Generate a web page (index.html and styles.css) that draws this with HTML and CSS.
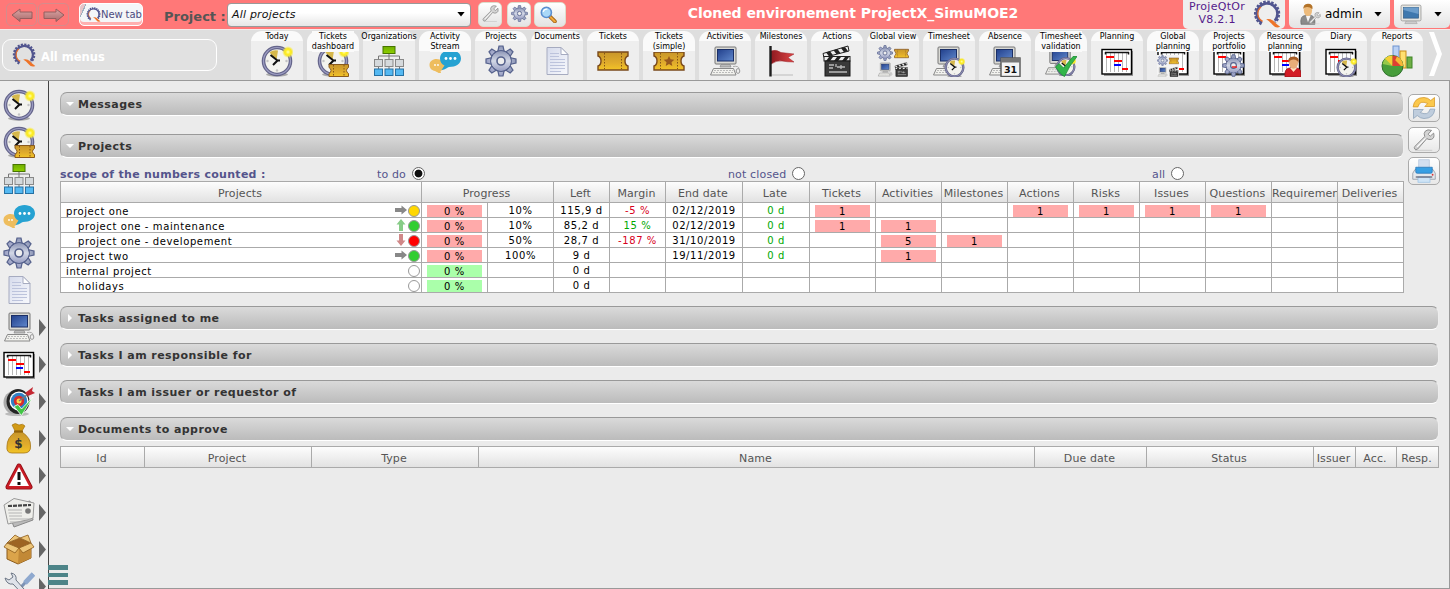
FILE: index.html
```html
<!DOCTYPE html>
<html lang="en">
<head>
<meta charset="utf-8">
<title>ProjeQtOr - Today</title>
<link rel="stylesheet" href="styles.css">
</head>
<body>
<svg class="defs" width="0" height="0" aria-hidden="true">
  <defs>
    <linearGradient id="steel" x1="0" y1="0" x2="0" y2="1"><stop offset="0" stop-color="#8f98b8"/><stop offset=".5" stop-color="#d3d8e6"/><stop offset="1" stop-color="#9aa0c4"/></linearGradient>
    <linearGradient id="screen" x1="0" y1="0" x2="1" y2="1"><stop offset="0" stop-color="#22408c"/><stop offset="1" stop-color="#6088cc"/></linearGradient>
    <linearGradient id="gold" x1="0" y1="0" x2="0" y2="1"><stop offset="0" stop-color="#c8962a"/><stop offset=".6" stop-color="#e0ac2c"/><stop offset="1" stop-color="#f2c426"/></linearGradient>
    <linearGradient id="page" x1="0" y1="0" x2="1" y2="1"><stop offset="0" stop-color="#d6dbec"/><stop offset="1" stop-color="#f8f9fd"/></linearGradient>
    <linearGradient id="red" x1="0" y1="0" x2="1" y2="0"><stop offset="0" stop-color="#8e1a20"/><stop offset="1" stop-color="#df4545"/></linearGradient>
    <linearGradient id="lime" x1="0" y1="0" x2="0" y2="1"><stop offset="0" stop-color="#6fae00"/><stop offset="1" stop-color="#8fd000"/></linearGradient>
    <linearGradient id="arrowfill" x1="0" y1="0" x2="0" y2="1"><stop offset="0" stop-color="#dba5a5"/><stop offset="1" stop-color="#a86a6a"/></linearGradient>
    <radialGradient id="glow"><stop offset="0" stop-color="#ffffb0"/><stop offset=".4" stop-color="#ffee20"/><stop offset=".6" stop-color="#f5e632"/><stop offset="1" stop-color="#fff040" stop-opacity="0"/></radialGradient>
  </defs>

  <symbol id="i-clock" viewBox="0 0 32 32">
    <ellipse cx="16" cy="29.500" rx="11" ry="2.200" fill="#aaa"/>
    <circle cx="16" cy="16" r="13.500" fill="#f3f3ee" stroke="#64648a" stroke-width="3.600"/>
    <circle cx="16" cy="16" r="13.500" fill="none" stroke="#9c9dc2" stroke-width="1.200"/>
    <path d="M15.500 15 8.500 7.500Q12 4.500 17 5.500Z" fill="#d6b84b"/>
    <path d="M9.500 10 16.500 15.500 12 20M16 15.500h3" fill="none" stroke="#111" stroke-width="2"/>
    <g fill="#c4c4c4"><circle cx="16" cy="25.500" r="1.200"/><circle cx="6.500" cy="16" r="1.200"/><circle cx="25.500" cy="16" r="1.200"/></g>
    <circle cx="27" cy="7" r="6" fill="url(#glow)"/>
  </symbol>
  <symbol id="i-ticket" viewBox="0 0 32 32">
    <path d="M1 7H31V11Q28 12 28 16T31 21V25H1V21Q4 20 4 16T1 11Z" fill="url(#gold)" stroke="#7a4a1c" stroke-width="1.400"/>
    <path d="M7.500 8V24M24.500 8V24" stroke="#855618" stroke-width="1" stroke-dasharray="1.500 1.500"/>
  </symbol>
  <symbol id="i-ticketstar" viewBox="0 0 32 32">
    <use href="#i-ticket"/>
    <path d="M16 11l1.600 3.300 3.700.4-2.800 2.500.8 3.700L16 19l-3.300 1.900.8-3.700-2.800-2.500 3.700-.4Z" fill="#98591e"/>
  </symbol>
  <symbol id="i-ticketdash" viewBox="0 0 32 32">
    <use href="#i-clock"/>
    <path d="M12 19.500H31.500V22.500Q29.500 23.500 29.500 25.500T31.500 28.500V31.500H12V28.500Q14 27.500 14 25.500T12 22.500Z" fill="url(#gold)" stroke="#8a5a1c"/>
    <path d="M16.500 20V31M27 20V31" stroke="#855618" stroke-dasharray="1.500 1.500"/>
  </symbol>
  <symbol id="i-org" viewBox="0 0 32 32">
    <path d="M16 9V14M5.500 14V11H26.500V14M5.500 20V24M16 20V24M26.500 20V24" fill="none" stroke="#777"/>
    <rect x="10" y="1.500" width="12" height="7" fill="url(#lime)" stroke="#477400"/>
    <g fill="#d5d9dc" stroke="#888"><rect x="1.500" y="14.500" width="8" height="7"/><rect x="12" y="14.500" width="8" height="7"/><rect x="22.500" y="14.500" width="8" height="7"/></g>
    <g fill="#55b9f2" stroke="#2671a3"><rect x="1.500" y="24" width="8" height="6.500"/><rect x="12" y="24" width="8" height="6.500"/><rect x="22.500" y="24" width="8" height="6.500"/></g>
  </symbol>
  <symbol id="i-chat" viewBox="0 0 32 32">
    <path d="M7.500 14C3.500 14 .5 16.500.5 20S3 25.500 6 26C8 27 9.500 28.500 12 28L11.500 26C14.500 25 16 23 16 20S12 14 7.500 14Z" fill="#eebd5e"/>
    <path d="M21.500 5C15.500 5 11 8.500 11 13.500 11 17 13 19.500 15.500 20.500L12.500 25C16.500 24.500 18.500 22.500 20 22 27 22 32 18.500 32 13.500S27.500 5 21.500 5Z" fill="#26a2d2"/>
    <g fill="#fff"><circle cx="17" cy="13.500" r="1.400"/><circle cx="21.500" cy="13.500" r="1.400"/><circle cx="26" cy="13.500" r="1.400"/><circle cx="6" cy="20" r=".9"/><circle cx="9" cy="20" r=".9"/></g>
  </symbol>
  <symbol id="i-gear" viewBox="0 0 32 32">
    <g fill="url(#steel)" stroke="#55618c" stroke-width="1.200">
      <path d="M14 1H18L19.500 8H12.500ZM12.500 24H19.500L18 31H14Z"/>
      <path d="M14 1H18L19.500 8H12.500ZM12.500 24H19.500L18 31H14Z" transform="rotate(45 16 16)"/>
      <path d="M14 1H18L19.500 8H12.500ZM12.500 24H19.500L18 31H14Z" transform="rotate(90 16 16)"/>
      <path d="M14 1H18L19.500 8H12.500ZM12.500 24H19.500L18 31H14Z" transform="rotate(135 16 16)"/>
      <circle cx="16" cy="16" r="10.300"/>
    </g>
    <circle cx="16" cy="16" r="9.700" fill="url(#steel)"/>
    <circle cx="16" cy="16" r="4" fill="#eee" stroke="#55618c" stroke-width="1.600"/>
  </symbol>
  <symbol id="i-doc" viewBox="0 0 32 32">
    <path d="M6 2.500H20L27 9.500V29.500H6Z" fill="url(#page)" stroke="#a6abc0"/>
    <path d="M20 2.500V9.500H27Z" fill="#fff" stroke="#a6abc0"/>
    <path d="M9 8.500H18M9 11.500H18M9 14.500H24M9 17.500H24M9 20.500H24M9 23.500H24M9 26.500H20" stroke="#bcc3dc"/>
  </symbol>
  <symbol id="i-computer" viewBox="0 0 32 32">
    <rect x="6" y="2" width="21" height="17" rx="1" fill="#d9d9d4" stroke="#777"/>
    <rect x="8.500" y="4.500" width="16" height="11.500" fill="url(#screen)" stroke="#1b2f66"/>
    <path d="M12 19.500H21L22 22H11Z" fill="#bbb" stroke="#888" stroke-width=".7"/>
    <path d="M4.500 23.500H24.500L27 30H1.500Z" fill="#f2f2ee" stroke="#888"/>
    <path d="M5 25.500H24M4 27.500H25" stroke="#bbb" stroke-dasharray="2 1"/>
    <path d="M24 21.500Q30 20.500 30 24" fill="none" stroke="#aaa"/>
    <ellipse cx="29" cy="26" rx="1.800" ry="2.400" fill="#eee" stroke="#999"/>
  </symbol>
  <symbol id="i-flag" viewBox="0 0 32 32">
    <path d="M7 30H28" stroke="#ccc" stroke-width="1.500"/>
    <path d="M6 6Q11 4 16 7.500L29 9 23 12.500 29 17Q22 17 17 16T6 19Z" fill="url(#red)" stroke="#9a2228" stroke-width=".5"/>
    <path d="M5.500 1V31.500" stroke="#1e1e1e" stroke-width="2.400"/>
  </symbol>
  <symbol id="i-clap" viewBox="0 0 32 32">
    <path d="M2 8.500 27 1 28 6 3 12.500Z" fill="#eee" stroke="#222"/>
    <path d="M5 7.500 8 11.300 12 10.200 9 6.300ZM12.500 5.300 15.500 9.200 19.500 8.200 16.500 4.100ZM20 3 23 7.200 27 6.200 24 1.900Z" fill="#222"/>
    <rect x="3" y="11.500" width="26" height="4.500" fill="#eee" stroke="#222"/>
    <path d="M5 16 8 12H12L9 16ZM13 16 16 12H20L17 16ZM21 16 24 12H28L25 16Z" fill="#222"/>
    <rect x="4" y="16" width="25" height="15" fill="#3a3a3a" stroke="#181818"/>
    <path d="M8 20H13M15 19V22M8 23H12M16 22H24M20 20V24M8 27H26" stroke="#bbb" stroke-width="1.300"/>
  </symbol>
  <symbol id="i-global" viewBox="0 0 32 32">
    <use href="#i-gear" x="0" y="0" width="16" height="16"/>
    <use href="#i-ticket" x="17" y="1" width="15" height="15"/>
    <use href="#i-computer" x="0" y="17" width="16" height="15"/>
    <use href="#i-clap" x="17" y="17" width="15" height="15"/>
  </symbol>
  <symbol id="i-timesheet" viewBox="0 0 32 32">
    <use href="#i-computer" x="-1"/>
    <use href="#i-clock" x="11" y="12" width="21" height="21"/>
  </symbol>
  <symbol id="i-absence" viewBox="0 0 32 32">
    <use href="#i-computer" x="-1"/>
    <rect x="12" y="13" width="19" height="18.500" fill="#f4f4f4" stroke="#555" stroke-width="1.400"/>
    <path d="M12 13H31V17.500H12Z" fill="#777"/>
  </symbol>
  <symbol id="i-validation" viewBox="0 0 32 32">
    <use href="#i-timesheet" width="31" height="31"/>
    <path d="M10.500 22 14 18.500 18.500 23 28 11.500H32Q24 21 19.500 31.500Q16 30 10.500 22Z" fill="#32b54a" stroke="#198b31" stroke-width=".8"/>
  </symbol>
  <symbol id="i-planning" viewBox="0 0 32 32">
    <rect x="3" y="6" width="29" height="25" fill="#999"/>
    <rect x="1" y="4.500" width="29.500" height="24.500" fill="#fff" stroke="#000" stroke-width="1.400"/>
    <path d="M5.500 8V27M9.500 8V27M13.500 8V27M17.500 8V27M21.500 8V27M25.500 8V27" stroke="#b8b8b8"/>
    <path d="M4 7.500H28M4.500 7V9.500M27.500 7V9.500" stroke="#111" stroke-width="1.500"/>
    <path d="M5 12H13M13 16H21M21 24H27" stroke="#f00" stroke-width="2"/>
    <path d="M13 20H20" stroke="#00f" stroke-width="2"/>
  </symbol>
  <symbol id="i-globalplan" viewBox="0 0 32 32">
    <use href="#i-planning"/>
    <rect x="0" y="10" width="22" height="22" fill="#f4f4f4"/>
    <use href="#i-global" x="0" y="10" width="22" height="22"/>
  </symbol>
  <symbol id="i-portfolio" viewBox="0 0 32 32">
    <use href="#i-planning"/>
    <use href="#i-gear" x="9" y="9" width="23" height="23"/>
    <path d="M19 22h5" stroke="#e22" stroke-width="1.500"/>
  </symbol>
  <symbol id="i-resource" viewBox="0 0 32 32">
    <use href="#i-planning"/>
    <path d="M16 32Q15 23 21 23H28Q33 24 32 32Z" fill="#d21b25" stroke="#8e1219" stroke-width=".7"/>
    <path d="M21 23 24.500 27 28 23Z" fill="#ffe0c0"/>
    <ellipse cx="24.500" cy="18" rx="4.500" ry="5.800" fill="#e8ad79"/>
    <path d="M19.500 18Q18 11.500 24.500 11.500T29.500 18Q28 14 24 14.500T19.500 18Z" fill="#a65c24"/>
  </symbol>
  <symbol id="i-diary" viewBox="0 0 32 32">
    <use href="#i-planning"/>
    <use href="#i-clock" x="11" y="12" width="21" height="21"/>
  </symbol>
  <symbol id="i-reports" viewBox="0 0 32 32">
    <rect x="12" y="1" width="6" height="16" fill="#b9d0f4" stroke="#6d92ce"/>
    <rect x="19" y="6" width="6" height="17" fill="#ffe070" stroke="#c98b18"/>
    <rect x="26" y="12" width="5" height="11" fill="#6fae45" stroke="#3d8424"/>
    <circle cx="11.500" cy="21" r="10.500" fill="#479d3b" stroke="#2e6f2a"/>
    <path d="M11.500 21 1.500 19Q3 11 11.500 10.500Z" fill="#97c94a"/>
    <path d="M11.500 21 4 13.500Q7 10.500 11.500 10.500Z" fill="#f5cf34"/>
    <path d="M11.500 21V10.500Q20 11 22 21Z" fill="#dd3f32"/>
    <path d="M11.500 21 16 11.500Q22 14 22 21Z" fill="#f4b936"/>
    <path d="M11.500 21 13 14 20 21Z" fill="#dd3f32"/>
  </symbol>
  <symbol id="i-target" viewBox="0 0 32 32">
    <ellipse cx="14" cy="29" rx="12" ry="2" fill="#bbb"/>
    <ellipse cx="11" cy="17.500" rx="10.500" ry="11.500" fill="#aaa"/>
    <ellipse cx="15" cy="16.500" rx="11.500" ry="12.500" fill="#242424"/>
    <circle cx="16" cy="16" r="9.500" fill="#fff"/>
    <circle cx="16" cy="16" r="8.200" fill="#2f80c5"/>
    <circle cx="16" cy="16" r="5.200" fill="#d92c2c"/>
    <circle cx="16" cy="16" r="2.500" fill="#ffd34d"/>
    <path d="M16 16 28 7" stroke="#777" stroke-width="1.500"/>
    <path d="M22 8 30 2 29 6 32 8 25 11Z" fill="#c42832"/>
    <path d="M11 21.500 15 19.500 18.500 24 30 12Q24 22 18.500 30.500Z" fill="#42c545" stroke="#fff" stroke-width=".8"/>
  </symbol>
  <symbol id="i-money" viewBox="0 0 32 32">
    <path d="M9 3Q12 0 16 3 20 1 22 4L19 9H12Z" fill="#d29a16" stroke="#9a6b0a" stroke-width=".6"/>
    <path d="M12 10H19Q28 16 27.500 24 28 31 21 31H9Q3 31 4 24 4 16 12 10Z" fill="url(#gold)" stroke="#a67410" stroke-width=".8"/>
    <path d="M11 9.500H20" stroke="#91620b" stroke-width="2"/>
  </symbol>
  <symbol id="i-warning" viewBox="0 0 32 32">
    <path d="M16 7 27 28H5Z" fill="#fff" stroke="#8f0d14" stroke-width="5" stroke-linejoin="round"/>
    <path d="M16 7 27 28H5Z" fill="#fff" stroke="#c91c25" stroke-width="3.500" stroke-linejoin="round"/>
    <path d="M16 8 26 27H6Z" fill="#fff"/>
    <path d="M16 13V21M16 23V26" stroke="#111" stroke-width="3"/>
  </symbol>
  <symbol id="i-news" viewBox="0 0 32 32">
    <path d="M3 11 27 5 30 24 11 31Z" fill="#bbb" stroke="#888"/>
    <path d="M1 9 11 2.500 31 7 30 22 24 24 5 28Z" fill="#eeeeea" stroke="#999"/>
    <path d="M5 10 28 9" stroke="#444" stroke-width="2.200" stroke-dasharray="4 1"/>
    <path d="M5 14H19M5.500 17H19M6 20H19M6.500 23H27M7 26H18" stroke="#b4b4b4"/>
    <circle cx="25" cy="15" r="2.800" fill="#777"/>
  </symbol>
  <symbol id="i-box" viewBox="0 0 32 32">
    <path d="M4 11 16 15 28 11V25L15 31 4 26Z" fill="#dba44a" stroke="#8b5b1c"/>
    <path d="M16 15 28 11V25L15 31Z" fill="#c28936"/>
    <path d="M4 10 17 5 28 10 16 15Z" fill="#9d6423"/>
    <path d="M4 10 12 2 17 5ZM17 5 25 2 28 10ZM4 10 16 15 12 20 1 14ZM28 10 31 14 20 20 16 15Z" fill="#edc578" stroke="#8b5b1c" stroke-width=".8"/>
  </symbol>
  <symbol id="i-tools" viewBox="0 0 32 32">
    <path d="M30 4 20 15 5 31" stroke="#7d93b5" stroke-width="3"/>
    <path d="M30.500 4 22 13" stroke="#8fa9cf" stroke-width="5"/>
    <path d="M8 3Q14 4 13 10L29 28 26 31 10 14Q4 15 2 8L6 10 10 7Z" fill="#dfe3ea" stroke="#6c7685"/>
  </symbol>
  <symbol id="i-wrench" viewBox="0 0 32 32">
    <path d="M3 31H28" stroke="#ccc" stroke-width="1.500"/>
    <path d="M27 2 22 7.500 25 10.500 30 6Q32 13 27 15 23 16 20 14L7 29Q4 31 2.500 29T3 25L17 11Q15 6 18 3T27 2Z" fill="#d4d4d4" stroke="#858585" stroke-width="1.300"/>
    <path d="M6 26 18 13.500" stroke="#fff" stroke-width="1.500"/>
  </symbol>
  <symbol id="i-search" viewBox="0 0 32 32">
    <path d="M18 19 28 29" stroke="#9c5c13" stroke-width="7" stroke-linecap="round"/>
    <path d="M20 21 28 29" stroke="#f2a93a" stroke-width="4" stroke-linecap="round"/>
    <circle cx="12" cy="12" r="9.500" fill="#a9d8f8" stroke="#5a8fd0" stroke-width="3"/>
    <path d="M6 11Q8 5 14 6" fill="none" stroke="#fff" stroke-width="2.500"/>
  </symbol>
  <symbol id="i-logo" viewBox="0 0 32 32">
    <path d="M10 27A13 13 0 1 1 25 25" fill="none" stroke="#51558f" stroke-width="4" stroke-dasharray="2.700 1.600"/>
    <path d="M9.500 25.500A11.800 11.800 0 1 1 25 23.500" fill="none" stroke="#51558f" stroke-width="3"/>
    <path d="M11 24.500A10 10 0 0 1 9 8" fill="none" stroke="#e66f2d" stroke-width="1.500"/>
    <path d="M15 22Q21 21 23.500 24T31 30.500Q26 33 22 28 19 24 15 22Z" fill="#ee7429"/>
  </symbol>
  <symbol id="i-arrow" viewBox="0 0 22 14">
    <path d="M1 7 9 1V4H21V10.500H9V13.500Z" fill="url(#arrowfill)" stroke="#945f5f"/>
  </symbol>
  <symbol id="i-monitor" viewBox="0 0 32 32">
    <path d="M10 24H22L25 30H7Z" fill="#ccc" stroke="#aaa"/>
    <rect x="1.500" y="3" width="29" height="23" rx="2" fill="#e6e6e2" stroke="#888"/>
    <rect x="5" y="6.500" width="22" height="15.500" fill="#3f78ae" stroke="#315980"/>
    <path d="M5 10 27 16V6.500H5Z" fill="#6c9dcb"/>
  </symbol>
  <symbol id="i-user" viewBox="0 0 32 32">
    <path d="M3 31Q1 18 10 18H18Q24 20 23 31Z" fill="#8b8b8b" stroke="#666"/>
    <path d="M10 18 13 28 17 18Z" fill="#f4f4f4"/>
    <ellipse cx="13" cy="11" rx="6" ry="8" fill="#edbb7c"/>
    <path d="M6.500 11Q5 1 13 1T19.500 9Q15 5 10 6T6.500 11Z" fill="#b37329"/>
    <use href="#i-wrench" x="14" y="13" width="18" height="18"/>
  </symbol>
  <symbol id="i-refresh" viewBox="0 0 32 32">
    <path d="M1.500 14.500Q3 2 16 2 21 2 25 6L30 2V14H17L21 10Q10 5 8 14.500Z" fill="#fbc84c" stroke="#d69522"/>
    <path d="M30.500 17.500Q29 30 16 30 11 30 7 26L2 30V18H15L11 22Q22 27 24 17.500Z" fill="#bfcddd" stroke="#8ba0b7"/>
  </symbol>
  <symbol id="i-print" viewBox="0 0 32 32">
    <rect x="9" y="1" width="14" height="12" fill="#d3dff0" stroke="#b3c5dc"/>
    <path d="M4 14H28L31 19V27H1V19Z" fill="#e4e8ec" stroke="#8a929b"/>
    <path d="M5 11H27V17Q27 19 25 19H7Q5 19 5 17Z" fill="#379fe4" stroke="#2874b4"/>
    <rect x="8" y="24" width="16" height="7" fill="#cfe4f6" stroke="#9bc3e6"/>
    <path d="M5 24H27" stroke="#556" stroke-width="1.500"/>
    <circle cx="27.500" cy="21" r="1.200" fill="#d33"/>
  </symbol>
  <symbol id="i-trend" viewBox="0 0 12 12"><path d="M0 4H6.500V1.500L12 6 6.500 10.500V8H0Z" fill="currentColor"/></symbol>
</svg>

<header class="topbar">
  <div class="history">
    <button class="hist"><svg><use href="#i-arrow"/></svg></button>
    <button class="hist flip"><svg><use href="#i-arrow"/></svg></button>
  </div>
  <button class="newtab"><svg><use href="#i-logo"/></svg><span>New tab</span></button>
  <span class="project-label">Project&nbsp;:</span>
  <div class="project-select"><span>All projects</span><i class="caret"></i></div>
  <button class="tool"><svg><use href="#i-wrench"/></svg></button>
  <button class="tool"><svg><use href="#i-gear"/></svg></button>
  <button class="tool search"><svg><use href="#i-search"/></svg></button>
  <h1 class="env">Cloned environement ProjectX_SimuMOE2</h1>
  <div class="version"><span>ProjeQtOr<br>V8.2.1</span><svg><use href="#i-logo"/></svg></div>
  <div class="user"><svg><use href="#i-user"/></svg><span>admin</span><i class="caret"></i></div>
  <div class="display"><svg><use href="#i-monitor"/></svg><i class="caret"></i></div>
</header>

<nav class="menubar">
  <div class="allmenus"><svg><use href="#i-logo"/></svg><span>All menus</span></div>
  <div class="tabs">
    <a class="tab"><span>Today</span><svg><use href="#i-clock"/></svg></a>
    <a class="tab two"><span>Tickets<br>dashboard</span><svg><use href="#i-ticketdash"/></svg></a>
    <a class="tab"><span>Organizations</span><svg><use href="#i-org"/></svg></a>
    <a class="tab two"><span>Activity<br>Stream</span><svg><use href="#i-chat"/></svg></a>
    <a class="tab"><span>Projects</span><svg><use href="#i-gear"/></svg></a>
    <a class="tab"><span>Documents</span><svg><use href="#i-doc"/></svg></a>
    <a class="tab"><span>Tickets</span><svg><use href="#i-ticket"/></svg></a>
    <a class="tab two"><span>Tickets<br>(simple)</span><svg><use href="#i-ticketstar"/></svg></a>
    <a class="tab"><span>Activities</span><svg><use href="#i-computer"/></svg></a>
    <a class="tab"><span>Milestones</span><svg><use href="#i-flag"/></svg></a>
    <a class="tab"><span>Actions</span><svg><use href="#i-clap"/></svg></a>
    <a class="tab"><span>Global view</span><svg><use href="#i-global"/></svg></a>
    <a class="tab"><span>Timesheet</span><svg><use href="#i-timesheet"/></svg></a>
    <a class="tab"><span>Absence</span><svg viewBox="0 0 32 32"><use href="#i-absence"/><text class="day" x="21.500" y="27.500">31</text></svg></a>
    <a class="tab two"><span>Timesheet<br>validation</span><svg><use href="#i-validation"/></svg></a>
    <a class="tab"><span>Planning</span><svg><use href="#i-planning"/></svg></a>
    <a class="tab two"><span>Global<br>planning</span><svg><use href="#i-globalplan"/></svg></a>
    <a class="tab two"><span>Projects<br>portfolio</span><svg><use href="#i-portfolio"/></svg></a>
    <a class="tab two"><span>Resource<br>planning</span><svg><use href="#i-resource"/></svg></a>
    <a class="tab"><span>Diary</span><svg><use href="#i-diary"/></svg></a>
    <a class="tab"><span>Reports</span><svg><use href="#i-reports"/></svg></a>
  </div>
  <svg class="next" viewBox="0 0 14 44"><path d="M0 0H5L13 22 5 44H0L8 22Z" fill="#fff"/></svg>
</nav>

<div class="body">
  <aside class="side">
    <a><svg><use href="#i-clock"/></svg></a>
    <a><svg><use href="#i-ticketdash"/></svg></a>
    <a><svg><use href="#i-org"/></svg></a>
    <a><svg><use href="#i-chat"/></svg></a>
    <a><svg><use href="#i-gear"/></svg></a>
    <a><svg><use href="#i-doc"/></svg></a>
    <a><svg><use href="#i-computer"/></svg><i></i></a>
    <a><svg><use href="#i-planning"/></svg><i></i></a>
    <a><svg><use href="#i-target"/></svg><i></i></a>
    <a><svg viewBox="0 0 32 32"><use href="#i-money"/><text class="dollar" x="15.500" y="25.500">$</text></svg><i></i></a>
    <a><svg><use href="#i-warning"/></svg><i></i></a>
    <a><svg><use href="#i-news"/></svg><i></i></a>
    <a><svg><use href="#i-box"/></svg><i></i></a>
    <a><svg><use href="#i-tools"/></svg><i></i></a>
  </aside>
  <div class="burger"><i></i><i></i><i></i></div>

  <main class="content">
    <div class="upper">
      <div class="upper-main">
        <h2 class="section open first">Messages</h2>
        <h2 class="section open">Projects</h2>
        <div class="scope">
          <b>scope of the numbers counted :</b>
          <label class="todo">to do<i class="radio on"></i></label>
          <label class="notclosed">not closed<i class="radio"></i></label>
          <label class="all">all<i class="radio"></i></label>
        </div>
        <table class="grid projects">
          <colgroup><col class="c-name"><col class="c-std"><col class="c-std"><col class="c-num"><col class="c-num"><col class="c-date"><col class="c-late"><col class="c-std" span="9"></colgroup>
          <thead><tr><th>Projects</th><th colspan="2">Progress</th><th>Left</th><th>Margin</th><th>End date</th><th>Late</th><th>Tickets</th><th>Activities</th><th>Milestones</th><th>Actions</th><th>Risks</th><th>Issues</th><th>Questions</th><th class="cut">Requirements</th><th>Deliveries</th></tr></thead>
          <tbody>
            <tr><td><div class="name"><span>project one</span><svg class="trend"><use href="#i-trend"/></svg><i class="dot yellow"></i></div></td><td><b class="bar">0 %</b></td><td>10%</td><td>115,9 d</td><td class="neg">-5 %</td><td>02/12/2019</td><td class="pos">0 d</td><td><b class="bar">1</b></td><td></td><td></td><td><b class="bar">1</b></td><td><b class="bar">1</b></td><td><b class="bar">1</b></td><td><b class="bar">1</b></td><td></td><td></td></tr>
            <tr><td><div class="name sub"><span>project one - maintenance</span><svg class="trend up"><use href="#i-trend"/></svg><i class="dot green"></i></div></td><td><b class="bar">0 %</b></td><td>10%</td><td>85,2 d</td><td class="pos">15 %</td><td>02/12/2019</td><td class="pos">0 d</td><td><b class="bar">1</b></td><td><b class="bar">1</b></td><td></td><td></td><td></td><td></td><td></td><td></td><td></td></tr>
            <tr><td><div class="name sub"><span>project one - developement</span><svg class="trend down"><use href="#i-trend"/></svg><i class="dot red"></i></div></td><td><b class="bar">0 %</b></td><td>50%</td><td>28,7 d</td><td class="neg">-187 %</td><td>31/10/2019</td><td class="pos">0 d</td><td></td><td><b class="bar">5</b></td><td><b class="bar">1</b></td><td></td><td></td><td></td><td></td><td></td><td></td></tr>
            <tr><td><div class="name"><span>project two</span><svg class="trend"><use href="#i-trend"/></svg><i class="dot green"></i></div></td><td><b class="bar">0 %</b></td><td>100%</td><td>9 d</td><td></td><td>19/11/2019</td><td class="pos">0 d</td><td></td><td><b class="bar">1</b></td><td></td><td></td><td></td><td></td><td></td><td></td><td></td></tr>
            <tr><td><div class="name"><span>internal project</span><i class="dot"></i></div></td><td><b class="bar ok">0 %</b></td><td></td><td>0 d</td><td></td><td></td><td></td><td></td><td></td><td></td><td></td><td></td><td></td><td></td><td></td><td></td></tr>
            <tr><td><div class="name sub"><span>holidays</span><i class="dot"></i></div></td><td><b class="bar ok">0 %</b></td><td></td><td>0 d</td><td></td><td></td><td></td><td></td><td></td><td></td><td></td><td></td><td></td><td></td><td></td><td></td></tr>
          </tbody>
        </table>
      </div>
      <div class="actions">
        <button><svg><use href="#i-refresh"/></svg></button>
        <button class="short"><svg><use href="#i-wrench"/></svg></button>
        <button><svg><use href="#i-print"/></svg></button>
      </div>
    </div>
    <div class="lower">
      <h2 class="section">Tasks assigned to me</h2>
      <h2 class="section">Tasks I am responsible for</h2>
      <h2 class="section">Tasks I am issuer or requestor of</h2>
      <h2 class="section open">Documents to approve</h2>
    </div>
    <table class="grid docs">
      <colgroup><col class="d-id"><col class="d-mid"><col class="d-mid"><col class="d-name"><col class="d-due"><col class="d-mid"><col class="d-issuer"><col class="d-acc"><col class="d-resp"></colgroup>
      <thead><tr><th>Id</th><th>Project</th><th>Type</th><th>Name</th><th>Due date</th><th>Status</th><th>Issuer</th><th>Acc.</th><th>Resp.</th></tr></thead>
    </table>
  </main>
</div>
</body>
</html>
```
FILE: styles.css
```css
* { box-sizing: border-box; }
html, body { height: 100%; }
body {
  margin: 0;
  height: 589px;
  overflow: hidden;
  display: flex;
  flex-direction: column;
  background: #ebebeb;
  color: #000;
  font-family: Verdana, "DejaVu Sans", sans-serif;
  font-size: 11px;
}
.defs { position: absolute; }
svg { display: block; flex: none; }
button { padding: 0; font-family: inherit; flex: none; }
.day, .dollar { font-weight: bold; text-anchor: middle; }
.day { font-size: 9.500px; fill: #111; }
.dollar { font-size: 12px; fill: #333; }

/* top bar */
.topbar { height: 29px; flex: none; display: flex; align-items: flex-start; background: #ff7878; }
.history { display: flex; gap: 1px; margin: 3px 0 0 6px; }
.hist {
  width: 31px; height: 23px; display: flex; align-items: center; justify-content: center;
  background: transparent; border: 1px solid #d58c8c; border-radius: 5px;
}
.hist svg { width: 22px; height: 14px; }
.flip svg { transform: scaleX(-1); }
.newtab {
  width: 64px; height: 23px; margin: 3px 0 0 10px; display: flex; align-items: center; overflow: hidden;
  border: 1px solid #fff; border-radius: 5px; color: #4c4c80; font-size: 10px; white-space: nowrap;
  background: linear-gradient(115deg, #e8c4c8 0 5px, #9fb0c0 5px 6px, #f4f6f8 6px);
  box-shadow: inset 0 -3px #ffb0b0;
}
.newtab svg { width: 15px; height: 15px; margin-left: 6px; }
.newtab span { letter-spacing: -.1px; }
.project-label { width: 63px; margin: 8px 0 0 21px; color: #555; font-weight: bold; font-size: 13px; line-height: 17px; white-space: nowrap; }
.project-select {
  width: 244px; height: 24px; margin-top: 3px; padding: 0 5px 2px 4px; display: flex; align-items: center; justify-content: space-between;
  border: 1px solid #999; border-radius: 4px; background: linear-gradient(#fff 40%, #e6e6e6);
  font-style: italic; font-size: 11px; letter-spacing: .2px; color: #111;
}
.caret { width: 8px; height: 5px; background: #000; clip-path: polygon(0 0, 100% 0, 50% 100%); }
.tool {
  width: 24px; height: 25px; margin: 2px 0 0 7px; display: flex; justify-content: center; padding-top: 2px;
  border: 1px solid #ddc; border-radius: 5px; background: linear-gradient(#fff, #e3e3e3);
}
.tool + .tool { margin-left: 5px; }
.tool svg { width: 17px; height: 17px; }
.tool.search { width: 32px; margin-left: 3px; padding: 3px 4px 0 0; }
.env { flex: 1; margin: 4px 43px 0 0; color: #fff; font-size: 14px; letter-spacing: -.05px; line-height: 18px; text-align: center; white-space: nowrap; }
.version {
  width: 102px; height: 29px; display: flex; justify-content: space-between; flex: none; padding: 0 4px 0 6px;
  border-radius: 0 0 5px 5px; background: #eee; color: #551a8b; font-size: 11px; letter-spacing: .3px; line-height: 13px; text-align: center;
}
.version svg { width: 28px; height: 28px; }
.user, .display { height: 28px; display: flex; align-items: center; flex: none; border-radius: 0 0 5px 5px; background: linear-gradient(#fff, #e4e4e4); }
.user { width: 101px; margin-left: 4px; padding: 0 8px 0 10px; font-size: 12px; }
.user svg { width: 22px; height: 22px; }
.user span { margin: 0 auto 0 4px; }
.display { width: 56px; margin-left: 4px; padding: 0 8px 0 6px; justify-content: space-between; }
.display svg { width: 22px; height: 22px; }

/* icon menu */
.menubar { height: 52px; flex: none; display: flex; background: #dedede; border-top: 1px solid #f5eaea; border-bottom: 1px solid #999; }
.allmenus {
  width: 215px; height: 32px; margin: 9px 34px 0 2px; padding-left: 9px; display: flex; align-items: center; gap: 5px; flex: none;
  border: 1px solid #fff; border-radius: 9px; color: #fff; font-size: 11.500px; font-weight: bold; background: #e1e1e1;
}
.allmenus svg { width: 24px; height: 24px; }
.allmenus span { padding-top: 3px; }
.tabs { display: flex; gap: 4px; }
.tab {
  width: 52px; height: 49px; margin-top: 1px; display: flex; flex-direction: column; align-items: center; position: relative;
  border-radius: 11px 11px 0 0; background: linear-gradient(#fafafa 10px, #eee 10px);
}
.tab.two { background: linear-gradient(#fafafa 20px, #eee 20px); }
.tab span { height: 15px; flex: none; padding-top: 1px; font-size: 8px; line-height: 10px; text-align: center; white-space: nowrap; z-index: 1; }
.tab.two span { height: 21px; background: #fafafa; }
.tab svg { width: 32px; height: 32px; margin-top: -1px; }
.tab.two svg { margin-top: -7px; }
.next { width: 14px; height: 44px; margin: 2px 0 0 6px; }

/* page body */
.body { flex: 1; min-height: 0; display: flex; position: relative; }
.side { width: 49px; flex: none; padding: 8px 0 0 3px; overflow: hidden; background: #eee; border-right: 1px solid #444; }
.side a { display: flex; height: 37px; align-items: flex-start; gap: 4px; }
.side svg { width: 32px; height: 32px; }
.side i { width: 7px; height: 17px; margin-top: 8px; background: #666; clip-path: polygon(0 0, 100% 50%, 0 100%); }
.burger { position: absolute; left: 48px; top: 484px; width: 20px; display: flex; flex-direction: column; gap: 3px; }
.burger i { height: 4.600px; background: #4d8488; }
.content { flex: 1; min-width: 0; padding: 0 0 0 11px; border-right: 1px solid #999; border-bottom: 1px solid #999; }
.upper { display: flex; gap: 4px; }
.upper-main { width: 1344px; flex: none; }
.section {
  height: 24px; margin: 0 0 13px 0; padding-left: 17px; position: relative;
  border-top: 1px solid #999; border-bottom: 1px solid #fff; border-left: 1px solid #aaa; border-right: 1px solid #eee; border-radius: 7px;
  background: linear-gradient(#dadada, #bbb); color: #333; font-size: 11px; letter-spacing: .45px; line-height: 23px; font-weight: bold;
}
.section::before { content: ""; position: absolute; left: 7px; top: 7px; width: 4px; height: 8px; background: #fff; clip-path: polygon(0 0, 100% 50%, 0 100%); }
.section.open::before { left: 5px; top: 9px; width: 8px; height: 4px; clip-path: polygon(0 0, 100% 0, 50% 100%); }
.section.first { margin: 11px 0 18px 0; }
.upper .section:nth-child(2) { margin-bottom: 4px; }
.scope { height: 19px; display: grid; grid-template-columns: 317px 351px 424px 1fr; align-items: center; color: #54548c; font-size: 11px; letter-spacing: .15px; line-height: 20px; }
.scope b { padding-top: 3px; letter-spacing: .28px; white-space: nowrap; }
.scope label { display: flex; align-items: center; gap: 6px; padding-top: 3px; }
.radio { width: 13px; height: 13px; margin-bottom: 4px; border: 1px solid #666; border-radius: 50%; background: #fff; }
.radio.on { background: radial-gradient(circle, #111 0 3.500px, #fff 4.300px); }

/* tables */
.grid { table-layout: fixed; border-collapse: separate; border-spacing: 0; border-top: 1px solid #aaa; border-left: 1px solid #aaa; }
.grid th {
  height: 21px; padding: 3px 2px 0 0; overflow: hidden; border-right: 1px solid #aaa; border-bottom: 1px solid #aaa;
  background: linear-gradient(#fdfdfd, #e2e2e2); color: #555; font-size: 11px; letter-spacing: .1px; line-height: 16px; font-weight: normal; white-space: nowrap;
}
.grid th.cut { padding-right: 0; text-align: left; }
.grid td { height: 15px; padding: 0; border-right: 1px solid #aaa; border-bottom: 1px solid #aaa; background: #fff; font-size: 10px; letter-spacing: .6px; line-height: 14px; text-align: center; white-space: nowrap; }
.grid.projects td { padding-top: 1px; line-height: 13px; }
.projects { width: 1344px; }
.c-name { width: 361px; }
.c-std { width: 66px; }
.c-num { width: 56px; }
.c-date { width: 77px; }
.c-late { width: 67px; }
.bar { display: block; height: 12px; margin: 0 5px; background: #faa; font-weight: normal; line-height: 13px; }
.bar.ok { background: #afa; }
.neg { color: #d8001c; }
.pos { color: #00a800; }
.name { height: 13px; display: flex; align-items: center; padding: 0 1px 0 5px; }
.name.sub { padding-left: 17px; }
.name span { margin-right: auto; padding-top: 1px; }
.trend { width: 12px; height: 12px; margin: -1px 1px 0 0; color: #888; }
.trend.up { transform: rotate(-90deg); color: #88cc88; }
.trend.down { transform: rotate(90deg); color: #d08888; }
.dot { width: 12px; height: 12px; border: 1px solid #999; border-radius: 50%; background: #fff; }
.yellow { background: #ffd700; }
.green { background: #32cd32; }
.red { background: #f00; }
.actions { display: flex; flex-direction: column; gap: 5px; padding-top: 13px; }
.actions button { width: 32px; height: 28px; display: flex; align-items: center; justify-content: center; border: 1px solid #aaa; border-radius: 5px; background: linear-gradient(#fff, #e8e8e8); }
.actions .short { height: 26px; margin-bottom: -1px; }
.actions svg { width: 24px; height: 24px; }
.actions .short svg { width: 22px; height: 22px; }
.lower { padding-top: 13px; width: 1379px; }
.lower .section:last-child { margin-bottom: 5px; }
.docs { width: 1379px; }
.d-id { width: 84px; }
.d-mid { width: 167px; }
.d-name { width: 556px; }
.d-due { width: 112px; }
.d-issuer { width: 42px; }
.d-acc { width: 41px; }
.d-resp { width: 42px; }
```
